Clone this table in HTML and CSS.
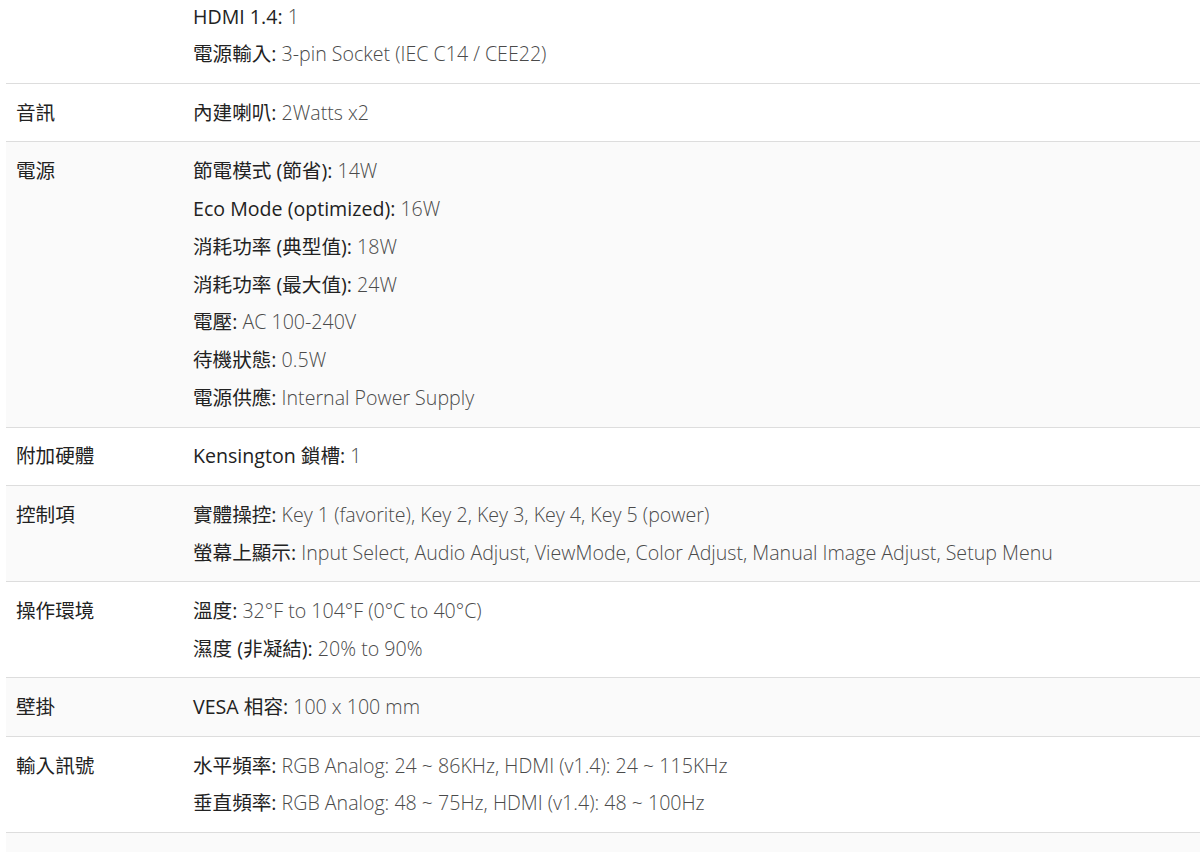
FILE: index.html
```html
<!DOCTYPE html>
<html>
<head>
    <title>規格</title>
    <link rel="stylesheet" href="styles.css">
</head>
<body>
    <div class="specs">
        <table class="spec-table">
            <tr>
                <td class="spec-name">輸入/輸出埠</td>
                <td class="spec-value">
                    <div class="item"><span class="key">VGA:</span> 1</div>
                    <div class="item"><span class="key">HDMI 1.4:</span> 1</div>
                    <div class="item"><span class="key">電源輸入:</span> 3-pin Socket (IEC C14 / CEE22)</div>
                </td>
            </tr>
            <tr>
                <td class="spec-name">音訊</td>
                <td class="spec-value">
                    <div class="item"><span class="key">內建喇叭:</span> 2Watts x2</div>
                </td>
            </tr>
            <tr>
                <td class="spec-name">電源</td>
                <td class="spec-value">
                    <div class="item"><span class="key">節電模式 (節省):</span> 14W</div>
                    <div class="item"><span class="key">Eco Mode (optimized):</span> 16W</div>
                    <div class="item"><span class="key">消耗功率 (典型值):</span> 18W</div>
                    <div class="item"><span class="key">消耗功率 (最大值):</span> 24W</div>
                    <div class="item"><span class="key">電壓:</span> AC 100-240V</div>
                    <div class="item"><span class="key">待機狀態:</span> 0.5W</div>
                    <div class="item"><span class="key">電源供應:</span> Internal Power Supply</div>
                </td>
            </tr>
            <tr>
                <td class="spec-name">附加硬體</td>
                <td class="spec-value">
                    <div class="item"><span class="key">Kensington 鎖槽:</span> 1</div>
                </td>
            </tr>
            <tr>
                <td class="spec-name">控制項</td>
                <td class="spec-value">
                    <div class="item"><span class="key">實體操控:</span> Key 1 (favorite), Key 2, Key 3, Key 4, Key 5 (power)</div>
                    <div class="item"><span class="key">螢幕上顯示:</span> Input Select, Audio Adjust, ViewMode, Color Adjust, Manual Image Adjust, Setup Menu</div>
                </td>
            </tr>
            <tr>
                <td class="spec-name">操作環境</td>
                <td class="spec-value">
                    <div class="item"><span class="key">溫度:</span> 32°F to 104°F (0°C to 40°C)</div>
                    <div class="item"><span class="key">濕度 (非凝結):</span> 20% to 90%</div>
                </td>
            </tr>
            <tr>
                <td class="spec-name">壁掛</td>
                <td class="spec-value">
                    <div class="item"><span class="key">VESA 相容:</span> 100 x 100 mm</div>
                </td>
            </tr>
            <tr>
                <td class="spec-name">輸入訊號</td>
                <td class="spec-value">
                    <div class="item"><span class="key">水平頻率:</span> RGB Analog: 24 ~ 86KHz, HDMI (v1.4): 24 ~ 115KHz</div>
                    <div class="item"><span class="key">垂直頻率:</span> RGB Analog: 48 ~ 75Hz, HDMI (v1.4): 48 ~ 100Hz</div>
                </td>
            </tr>
            <tr>
                <td class="spec-name">外觀</td>
                <td class="spec-value">
                    <div class="item"><span class="key">顏色:</span> 黑色</div>
                </td>
            </tr>
        </table>
    </div>
</body>
</html>
```

FILE: styles.css
```css
html, body {
    margin: 0;
    padding: 0;
    background-color: #fff;
    overflow: hidden;
}
body {
    font-family: "Open Sans", "Noto Sans CJK TC", sans-serif;
    color: #222;
}
.specs {
    margin-top: -50px;
    padding-left: 6px;
}
.spec-table {
    width: 100%;
    border-collapse: collapse;
    font-size: 19.6px;
}
.spec-table tr {
    border-bottom: 1px solid #ddd;
}
.spec-table tr:nth-child(2n+3) {
    background-color: #fafafa;
}
.spec-table td {
    vertical-align: top;
    padding: 9.8px 0 9.8px 10px;
}
.spec-name {
    width: 167px;
    line-height: 37.8px;
    color: #222;
}
.spec-value {
    color: #4a4a4a;
    font-weight: 300;
}
.item {
    line-height: 37.8px;
}
.key {
    color: #222;
    font-weight: 400;
}
```
